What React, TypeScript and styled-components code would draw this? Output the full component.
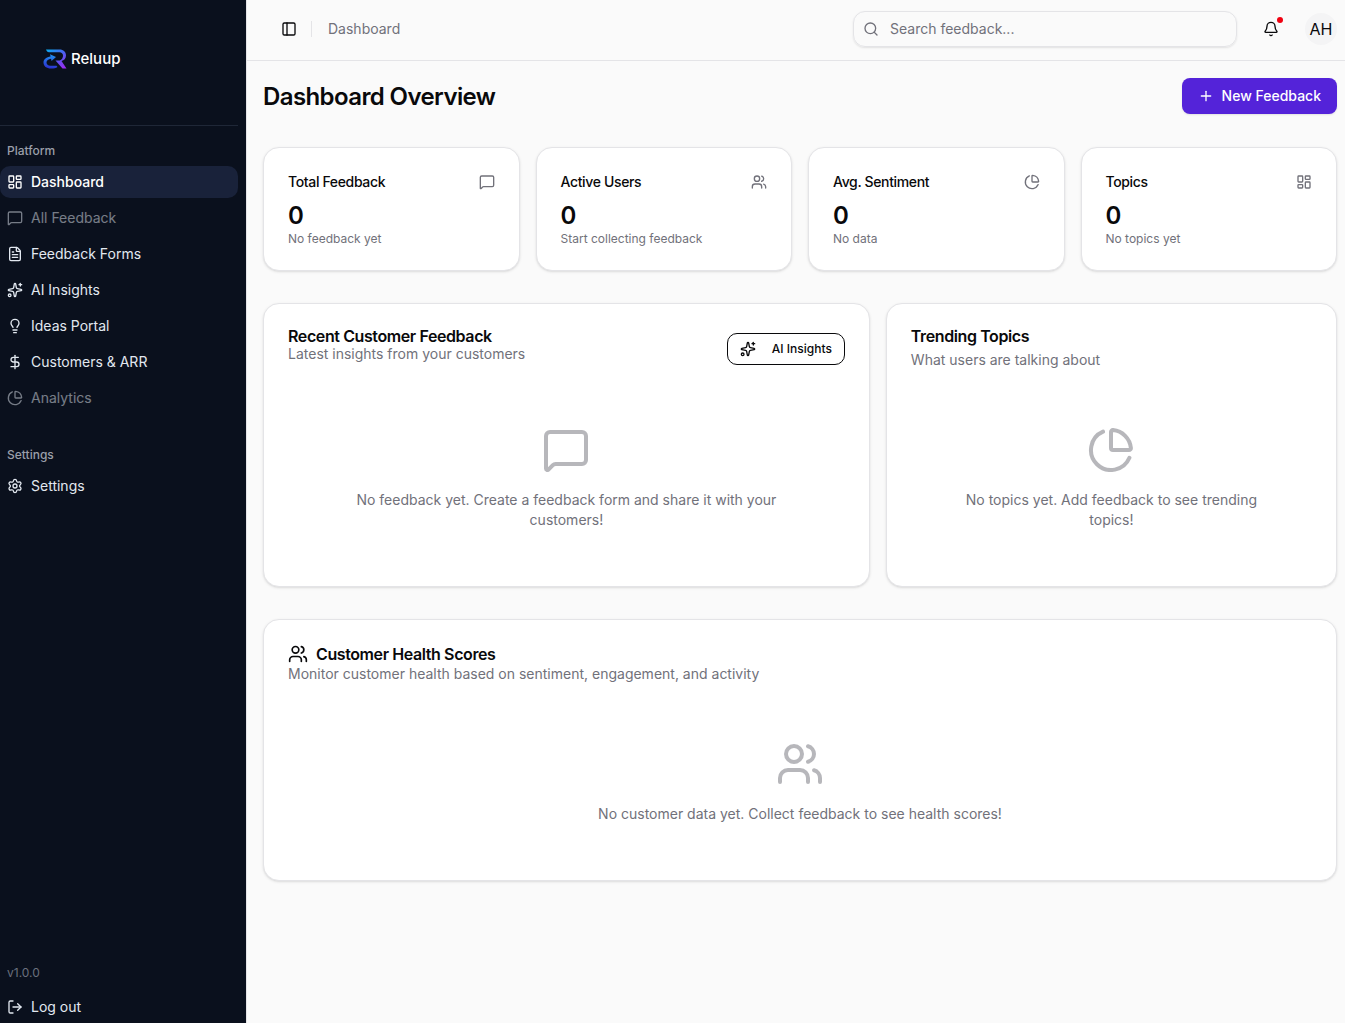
import React from "react";
import styled, { createGlobalStyle } from "styled-components";
import {
  Bell,
  ChartPie,
  DollarSign,
  FileText,
  LayoutDashboard,
  Lightbulb,
  LogOut,
  MessageSquare,
  PanelLeft,
  Plus,
  Search,
  Settings,
  Sparkles,
  Users,
  type LucideIcon,
} from "lucide-react";

const GlobalStyle = createGlobalStyle`
  *, *::before, *::after { box-sizing: border-box; }
  body {
    margin: 0;
    background: #fafafa;
    color: #09090b;
    font-family: Inter, "Liberation Sans", sans-serif;
    font-size: 14px;
    line-height: 20px;
    -webkit-font-smoothing: antialiased;
  }
  h1, h2, h3, p, ul { margin: 0; padding: 0; }
  button, input { font: inherit; color: inherit; }
  svg { flex-shrink: 0; display: block; }
`;

const Shell = styled.div`
  display: grid;
  grid-template-columns: 247px minmax(0, 1fr);
  min-height: 100vh;
`;

const Sidebar = styled.aside`
  display: flex;
  flex-direction: column;
  padding-right: 8px;
  background: #0a101d;
  border-right: 1px solid #e4e4e7;
  color: #e2e8f0;
`;

const Brand = styled.a`
  display: flex;
  align-items: center;
  gap: 4px;
  height: 126px;
  padding: 0 0 8px 43px;
  border-bottom: 1px solid #1f2737;
  color: #ffffff;
  font-size: 15px;
  font-weight: 500;
  text-decoration: none;
`;

const Nav = styled.nav`
  display: flex;
  flex-direction: column;
  gap: 24px;
  padding-top: 8px;
`;

const GroupLabel = styled.h2`
  padding: 2px 7px 0;
  color: #9a9fa9;
  font-size: 12px;
  font-weight: 500;
  line-height: 30px;
`;

const NavList = styled.ul`
  display: flex;
  flex-direction: column;
  gap: 4px;
  list-style: none;
`;

const NavLink = styled.a<{ $active?: boolean; $dim?: boolean }>`
  display: flex;
  align-items: center;
  gap: 8px;
  height: 32px;
  padding: 0 7px;
  border-radius: 10px;
  background: ${(p) => (p.$active ? "#19223a" : "transparent")};
  color: ${(p) => (p.$active ? "#ffffff" : "#e2e8f0")};
  font-weight: ${(p) => (p.$active ? 500 : 400)};
  opacity: ${(p) => (p.$dim ? 0.5 : 1)};
  text-decoration: none;
`;

const SidebarFooter = styled.footer`
  margin-top: auto;
`;

const Version = styled.p`
  padding: 0 7px 10px;
  color: #6b717d;
  font-size: 12px;
  line-height: 16px;
`;

const LogoutButton = styled.button`
  display: flex;
  align-items: center;
  gap: 8px;
  width: 100%;
  height: 32px;
  padding: 0 7px;
  border: 0;
  background: transparent;
`;

const TopBar = styled.header`
  display: flex;
  align-items: center;
  gap: 16px;
  padding: 11px 8px 13px 28px;
  border-bottom: 1px solid #e4e4e7;
`;

const IconButton = styled.button<{ $size: number }>`
  position: relative;
  display: grid;
  place-items: center;
  width: ${(p) => p.$size}px;
  height: ${(p) => p.$size}px;
  padding: 0;
  border: 0;
  border-radius: 8px;
  background: transparent;
`;

const AlertDot = styled.span`
  position: absolute;
  top: 6px;
  right: 6px;
  width: 6px;
  height: 6px;
  border-radius: 50%;
  background: #f00010;
`;

const Crumbs = styled.nav`
  display: flex;
  align-items: center;
  gap: 16px;
  margin: 0 auto 0 -8px;
  color: #71717a;
`;

const Divider = styled.span`
  width: 1px;
  height: 16px;
  background: #e4e4e7;
`;

const SearchBox = styled.label`
  display: flex;
  align-items: center;
  gap: 11px;
  width: 384px;
  height: 36px;
  padding: 0 9px;
  border: 1px solid #e4e4e7;
  border-radius: 12px;
  box-shadow: 0 1px 2px rgba(0, 0, 0, 0.1);
  color: #71717a;
`;

const SearchInput = styled.input`
  flex: 1;
  min-width: 0;
  padding: 0;
  border: 0;
  outline: 0;
  background: transparent;
  &::placeholder { color: #71717a; opacity: 1; }
`;

const Avatar = styled.button`
  display: grid;
  place-items: center;
  width: 32px;
  height: 32px;
  padding: 0;
  border: 0;
  border-radius: 50%;
  background: #f4f4f5;
  font-size: 16px;
`;

const Content = styled.main`
  display: flex;
  flex-direction: column;
  gap: 32px;
  padding: 16px 8px 16px 16px;
`;

const PageHead = styled.div`
  display: flex;
  align-items: center;
  justify-content: space-between;
  min-height: 38px;
`;

const PageTitle = styled.h1`
  align-self: flex-end;
  font-size: 24px;
  font-weight: 600;
  line-height: 36px;
  letter-spacing: -0.025em;
`;

const PrimaryButton = styled.button`
  display: flex;
  align-items: center;
  gap: 8px;
  height: 36px;
  padding: 0 16px;
  border: 0;
  border-radius: 8px;
  background: #5423d9;
  color: #ffffff;
  font-weight: 500;
  box-shadow: 0 1px 2px rgba(0, 0, 0, 0.1);
`;

const Card = styled.section`
  padding: 24px;
  border: 1px solid #e4e4e7;
  border-radius: 16px;
  background: #ffffff;
  box-shadow: 0 1px 3px rgba(0, 0, 0, 0.1), 0 1px 2px -1px rgba(0, 0, 0, 0.1);
`;

const StatGrid = styled.div`
  display: grid;
  grid-template-columns: repeat(4, minmax(0, 1fr));
  gap: 16px;
`;

const StatHead = styled.div`
  display: flex;
  align-items: center;
  justify-content: space-between;
  margin-bottom: 8px;
  color: #71717a;
`;

const StatTitle = styled.h3`
  color: #09090b;
  font-size: 14px;
  font-weight: 500;
  letter-spacing: -0.025em;
`;

const StatValue = styled.p`
  font-size: 24px;
  font-weight: 600;
  line-height: 32px;
`;

const StatNote = styled.p`
  color: #71717a;
  font-size: 12px;
  line-height: 14px;
`;

const PanelGrid = styled.div`
  display: grid;
  grid-template-columns: repeat(7, minmax(0, 1fr));
  gap: 16px;
`;

const Panel = styled(Card)<{ $span: number }>`
  grid-column: span ${(p) => p.$span};
`;

const PanelHead = styled.div<{ $height: number }>`
  display: flex;
  align-items: center;
  justify-content: space-between;
  min-height: ${(p) => p.$height}px;
  margin-bottom: 24px;
`;

const PanelHeading = styled.div<{ $gap?: number }>`
  display: flex;
  flex-direction: column;
  align-self: flex-start;
  gap: ${(p) => p.$gap ?? 0}px;
  color: #71717a;
`;

const PanelTitle = styled.h3`
  display: flex;
  align-items: center;
  gap: 8px;
  color: #09090b;
  font-size: 16px;
  font-weight: 600;
  line-height: 16px;
  letter-spacing: -0.025em;
`;

const OutlineButton = styled.button`
  display: flex;
  align-items: center;
  gap: 16px;
  height: 32px;
  padding: 0 12px;
  border: 1px solid #09090b;
  border-radius: 10px;
  background: #ffffff;
  font-size: 12px;
  font-weight: 500;
`;

const Empty = styled.div`
  display: flex;
  flex-direction: column;
  align-items: center;
  gap: 16px;
  padding: 32px 48px;
  color: #71717a;
  text-align: center;
  svg { opacity: 0.5; }
`;

function BrandMark() {
  return (
    <svg width="24" height="20" viewBox="0 0 24 20" fill="none" aria-hidden="true">
      <defs>
        <linearGradient id="mark" x1="4" y1="0" x2="20" y2="20" gradientUnits="userSpaceOnUse">
          <stop stopColor="#08aef0" />
          <stop offset="0.5" stopColor="#4a62f2" />
          <stop offset="1" stopColor="#9a2cf0" />
        </linearGradient>
        <linearGradient id="loop" x1="10" y1="5" x2="8" y2="19" gradientUnits="userSpaceOnUse">
          <stop stopColor="#2196f3" />
          <stop offset="1" stopColor="#2b35d0" />
        </linearGradient>
      </defs>
      <path d="M3 0.5H16.5C20.5 0.5 23 3 23 6.500C23 9.500 21 11.500 18.500 12L23.500 19.500H19.500L12.500 11.500H16C18.500 11.500 20 9 20 6.500C20 4.500 18.500 3.200 16.500 3.200H6C4.500 3.200 3.500 2 3 0.500Z" fill="url(#mark)" />
      <path d="M7 5.200L13 8L8.500 12L8 9.800C5.500 10 3.500 11.500 3.500 13.500C3.500 15.500 5 16.700 7.500 16.700H13.500L14.500 18C13 19.200 11 19.500 8 19.500C3.500 19.500 0.500 17.300 0.500 13.500C0.500 10.500 3.500 8 7.600 7.600Z" fill="url(#loop)" />
    </svg>
  );
}

type NavEntry = {
  label: string;
  icon: LucideIcon;
  active?: boolean;
  dim?: boolean;
};

const platform: NavEntry[] = [
  { label: "Dashboard", icon: LayoutDashboard, active: true },
  { label: "All Feedback", icon: MessageSquare, dim: true },
  { label: "Feedback Forms", icon: FileText },
  { label: "AI Insights", icon: Sparkles },
  { label: "Ideas Portal", icon: Lightbulb },
  { label: "Customers & ARR", icon: DollarSign },
  { label: "Analytics", icon: ChartPie, dim: true },
];

const settings: NavEntry[] = [{ label: "Settings", icon: Settings }];

const stats = [
  { title: "Total Feedback", value: "0", note: "No feedback yet", icon: MessageSquare },
  { title: "Active Users", value: "0", note: "Start collecting feedback", icon: Users },
  { title: "Avg. Sentiment", value: "0", note: "No data", icon: ChartPie },
  { title: "Topics", value: "0", note: "No topics yet", icon: LayoutDashboard },
];

function NavGroup({ label, entries }: { label: string; entries: NavEntry[] }) {
  return (
    <div>
      <GroupLabel>{label}</GroupLabel>
      <NavList>
        {entries.map(({ label: name, icon: Icon, active, dim }) => (
          <li key={name}>
            <NavLink href="#" $active={active} $dim={dim} aria-current={active ? "page" : undefined}>
              <Icon size={16} />
              {name}
            </NavLink>
          </li>
        ))}
      </NavList>
    </div>
  );
}

export default function App() {
  return (
    <Shell>
      <GlobalStyle />
      <Sidebar>
        <Brand href="#">
          <BrandMark />
          Reluup
        </Brand>
        <Nav aria-label="Main">
          <NavGroup label="Platform" entries={platform} />
          <NavGroup label="Settings" entries={settings} />
        </Nav>
        <SidebarFooter>
          <Version>v1.0.0</Version>
          <LogoutButton type="button">
            <LogOut size={16} />
            Log out
          </LogoutButton>
        </SidebarFooter>
      </Sidebar>

      <div>
        <TopBar>
          <IconButton type="button" $size={28} aria-label="Toggle sidebar">
            <PanelLeft size={16} />
          </IconButton>
          <Crumbs aria-label="Breadcrumb">
            <Divider />
            <span>Dashboard</span>
          </Crumbs>
          <SearchBox>
            <Search size={16} />
            <SearchInput type="search" placeholder="Search feedback..." aria-label="Search feedback" />
          </SearchBox>
          <IconButton type="button" $size={36} aria-label="Notifications">
            <Bell size={16} />
            <AlertDot />
          </IconButton>
          <Avatar type="button">AH</Avatar>
        </TopBar>

        <Content>
          <PageHead>
            <PageTitle>Dashboard Overview</PageTitle>
            <PrimaryButton type="button">
              <Plus size={16} />
              New Feedback
            </PrimaryButton>
          </PageHead>

          <StatGrid>
            {stats.map(({ title, value, note, icon: Icon }) => (
              <Card key={title}>
                <StatHead>
                  <StatTitle>{title}</StatTitle>
                  <Icon size={16} />
                </StatHead>
                <StatValue>{value}</StatValue>
                <StatNote>{note}</StatNote>
              </Card>
            ))}
          </StatGrid>

          <PanelGrid>
            <Panel $span={4}>
              <PanelHead $height={42}>
                <PanelHeading>
                  <PanelTitle>Recent Customer Feedback</PanelTitle>
                  <p>Latest insights from your customers</p>
                </PanelHeading>
                <OutlineButton type="button">
                  <Sparkles size={16} />
                  AI Insights
                </OutlineButton>
              </PanelHead>
              <Empty>
                <MessageSquare size={48} />
                <p>No feedback yet. Create a feedback form and share it with your customers!</p>
              </Empty>
            </Panel>
            <Panel $span={3}>
              <PanelHead $height={42}>
                <PanelHeading $gap={6}>
                  <PanelTitle>Trending Topics</PanelTitle>
                  <p>What users are talking about</p>
                </PanelHeading>
              </PanelHead>
              <Empty>
                <ChartPie size={48} />
                <p>No topics yet. Add feedback to see trending topics!</p>
              </Empty>
            </Panel>
          </PanelGrid>

          <Card>
            <PanelHead $height={40}>
              <PanelHeading>
                <PanelTitle>
                  <Users size={20} />
                  Customer Health Scores
                </PanelTitle>
                <p>Monitor customer health based on sentiment, engagement, and activity</p>
              </PanelHeading>
            </PanelHead>
            <Empty>
              <Users size={48} />
              <p>No customer data yet. Collect feedback to see health scores!</p>
            </Empty>
          </Card>
        </Content>
      </div>
    </Shell>
  );
}
